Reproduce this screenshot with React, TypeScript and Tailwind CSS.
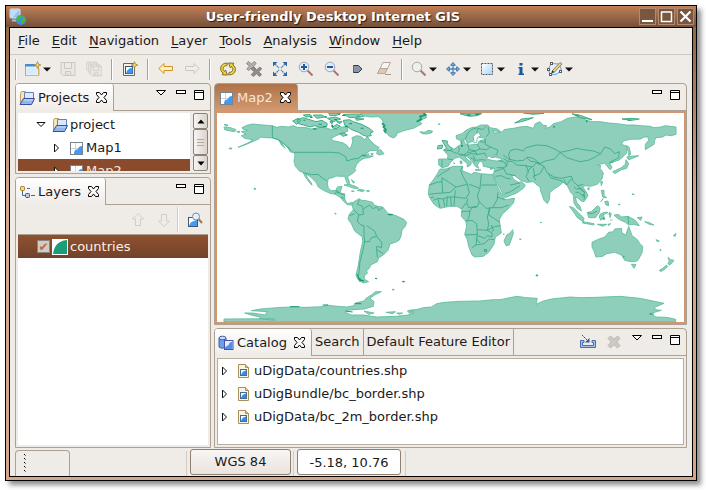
import React from "react";

type IconProps = { children: React.ReactNode; className?: string };

function Icon({ children, className = "" }: IconProps) {
  return (
    <svg viewBox="0 0 16 16" aria-hidden="true" className={`h-4 w-4 shrink-0 ${className}`}>
      {children}
    </svg>
  );
}

/* ---------- toolbar icons ---------- */

const Sparkle = () => (
  <path d="M12.500 .5 13.400 3.100 15.900 4 13.400 4.900 12.500 7.500 11.600 4.900 9.100 4 11.600 3.100Z" fill="#f3d67a" stroke="#b08a2c" strokeWidth=".8" />
);

const NewIcon = () => (
  <Icon>
    <rect x=".5" y="3.500" width="13" height="11" fill="#e2f1fb" stroke="#b9a878" />
    <rect x="0" y="3" width="11" height="2.500" fill="#4a8acb" />
    <path d="M1 14.500h13v-7" fill="none" stroke="#dcb75f" />
    <rect x="2" y="7" width="10" height="6" fill="#d6ecfa" />
    <Sparkle />
  </Icon>
);

const Floppy = ({ x = 0, y = 0, s = 1 }: { x?: number; y?: number; s?: number }) => (
  <g transform={`translate(${x} ${y}) scale(${s})`} fill="#ebe8e4" stroke="#cbc7c2">
    <path d="M1 1.500h14v13h-12l-2-2Z" />
    <path d="M4.500 1.500v6h7v-6M5.500 14.500v-4h5v4M7.500 12v2" fill="none" />
  </g>
);

const SaveIcon = () => (
  <Icon>
    <Floppy />
  </Icon>
);

const SaveAllIcon = () => (
  <Icon>
    <Floppy s={0.7} />
    <Floppy x={2} y={2} s={0.75} />
    <Floppy x={4} y={4} s={0.75} />
  </Icon>
);

const NewMapIcon = () => (
  <Icon>
    <path d="M1.500 2.500h11v12h-11z" fill="#f6f3e6" stroke="#6b6656" />
    <rect x="3.500" y="5.500" width="7" height="7" fill="#fff" stroke="#3b526e" />
    <path d="M4 12.500c1-4 3-5 6.500-6v6Z" fill="#3b97ef" />
    <Sparkle />
  </Icon>
);

const ArrowIcon = ({ kind }: { kind: "back" | "forward" }) => (
  <Icon>
    <path
      d={kind === "back" ? "M.8 7.500 6 2.500v3h8.500v4H6v3Z" : "M15.200 7.500 10 2.500v3H1.500v4H10v3Z"}
      fill={kind === "back" ? "#fdf0bb" : "#f1eeea"}
      stroke={kind === "back" ? "#cf932d" : "#cbc7c1"}
    />
  </Icon>
);

const RefreshIcon = () => (
  <Icon>
    <g fill="#f0d43c" stroke="#6f611e" strokeWidth=".9" strokeLinejoin="round">
      <path d="M7.500 2.200C3.500 1.800 1 4 .6 7.200c-.2 2 .8 3.800 2.600 4.800l-1 1.800 5.200.2-1.800-5-1 1.400C3.500 9.600 3 8.500 3.200 7.400c.3-1.800 1.700-2.900 3.700-2.800Z" />
      <path d="M8.500 13.800c4 .4 6.500-1.800 6.900-5 .2-2-.8-3.800-2.600-4.800l1-1.800-5.200-.2 1.800 5 1-1.400c1.100.8 1.600 1.900 1.400 3-.3 1.800-1.700 2.900-3.700 2.800Z" />
    </g>
  </Icon>
);

const StopIcon = () => (
  <Icon>
    <g fill="#b3b2b0" stroke="#7a7876" strokeWidth=".8">
      <path d="m.5 2.500 2-2L5.500 3l3-2.500 1.500 2-2.500 2.800L10 8 8 9.500 5.500 7 2.500 9.500.8 7.800 3.500 5.200Z" />
      <path fill="#8f8e8c" d="m5 8 2-2 3.500 2.800L14 6l1.700 2-3 2.800 3 2.700-2 2-3.200-2.700L7.200 15.500 5.200 13.500 8.200 10.800Z" />
    </g>
  </Icon>
);

const ExtentIcon = () => (
  <Icon>
    <path d="M1 1h4.500L1 5.500ZM15 1v4.500L10.500 1ZM1 15v-4.500L5.500 15ZM15 15h-4.500l4.500-4.500Z" fill="#2b66a5" />
    <path d="m3 3 4 4M13 3 9 7M3 13l4-4M13 13 9 9" stroke="#3f78b3" strokeWidth="1.300" strokeDasharray="1.600 .7" />
  </Icon>
);

const LensIcon = ({ sign }: { sign?: "plus" | "minus" }) => (
  <Icon>
    <path d="m9.500 9.500 5 5" stroke="#a5766c" strokeWidth="2" />
    <circle cx="6" cy="6" r="4.800" fill={sign ? "#e1eefa" : "#edf1ec"} stroke={sign ? "#9aa6ba" : "#a6aaa4"} />
    {sign && <path d={sign === "plus" ? "M3 6h6M6 3v6" : "M3 6h6"} stroke="#2458a0" strokeWidth="2" />}
  </Icon>
);

const TagIcon = () => (
  <Icon>
    <path d="M3.500 4.500h5l3.500 3.500-3.500 3.500h-5Z" fill="#8a93a3" stroke="#373a42" />
    <path d="M3.500 4.500v7" stroke="#5f6775" />
  </Icon>
);

const EraserIcon = () => (
  <Icon>
    <path d="M7 1.500h7.500L9 12.500H1.500Z" fill="#faf5ec" stroke="#b9a797" />
    <path d="M4 7.500h7.300L9 12.500H1.500Z" fill="#dccab7" stroke="#b9a797" />
    <path d="M9 13.500h6" stroke="#aa998b" />
  </Icon>
);

const PanIcon = () => (
  <Icon>
    <path d="M8 3v10M3 8h10" stroke="#4c84bd" strokeWidth="1.300" />
    <path d="M8 1.500 10.300 4.200H5.700ZM8 14.500l2.300-2.700H5.700ZM1.500 8l2.700-2.300v4.600ZM14.500 8l-2.700-2.300v4.600Z" fill="#a9c8e6" stroke="#2f6aa8" />
  </Icon>
);

const SelectIcon = () => (
  <Icon>
    <defs>
      <linearGradient id="selFill" x1="0" y1="0" x2="1" y2="1">
        <stop offset="0" stopColor="#fff" />
        <stop offset="1" stopColor="#a9d5f7" />
      </linearGradient>
    </defs>
    <rect x="2.500" y="2.500" width="11" height="11" fill="url(#selFill)" stroke="#4d5b6b" strokeDasharray="2 1" />
  </Icon>
);

const InfoIcon = () => (
  <Icon>
    <path d="M6.500 2h3v2.500h-3zM5.500 6h4v6.500H11V14H5.500v-1.500h1V7.500h-1Z" fill="#17599c" />
  </Icon>
);

const EditGeomIcon = () => (
  <Icon>
    <path d="M4 2.500 12 3l2.500 6L10 13l-7 1L1.500 8Z" fill="#e3f0fb" stroke="#5fa6e4" />
    <g fill="#fff" stroke="#5a5c61">
      <rect x="3.500" y="1.500" width="2" height="2" />
      <rect x=".5" y="7.500" width="2" height="2" />
      <rect x="12.500" y="9.500" width="2" height="2" />
      <rect x="2.500" y="12.500" width="2" height="2" />
    </g>
    <path d="m5.500 9.500 7.500-8 2 1.500-7.500 8-2.500 1Z" fill="#ecce89" stroke="#8a6b34" strokeWidth=".8" />
    <path d="m4.500 12 .8-2.500 2 1.500Z" fill="#222" />
  </Icon>
);

/* ---------- view icons ---------- */

const MapIcon = () => (
  <Icon>
    <rect x="2.500" y="2.500" width="12" height="12" fill="#fff" stroke="#7a838b" />
    <path d="M7.500 3v11M3 8.500h11" stroke="#cfd3d6" />
    <path d="M6 14c0-3 1-4 3-4.500 2-.5 1-3.500 5-3.500v8Z" fill="#3f9bf3" />
  </Icon>
);

const ProjectIcon = () => (
  <Icon>
    <path d="M1.500 12.500v-9l1-2h4l1 2h2v9Z" fill="#f7e7b8" stroke="#bb9f5f" />
    <path d="M5.500 2.500h9v9h-9z" fill="#dbe9fc" stroke="#6380bd" />
    <path d="M1 14.500 4.500 8.500h11l-3 6Z" fill="#8fb7ee" stroke="#3b4fa0" />
    <path d="M5 10h9" stroke="#cfe0f8" />
  </Icon>
);

const LayersIcon = () => (
  <Icon>
    <path d="M3.500 5v6.500H6M8 4.500h3M12 11.500h4" fill="none" stroke="#3a6ea8" />
    <rect x="1.500" y="2.500" width="4" height="4" rx="1" fill="#f5d98c" stroke="#a77b22" />
    <rect x="6.500" y="9.500" width="4" height="4" rx="1" fill="#c4c7e6" stroke="#504a80" />
  </Icon>
);

const LayerArrow = ({ down = false }: { down?: boolean }) => (
  <Icon>
    <path d={down ? "M8 14.500 2.500 9h3V2.500h5V9h3Z" : "M8 1.500 2.500 7h3v6.500h5V7h3Z"} fill="#efece8" stroke="#d1cdc7" />
  </Icon>
);

const ZoomLayerIcon = () => (
  <Icon>
    <rect x="1.500" y="5.500" width="9" height="9" fill="#fff" stroke="#45576a" />
    <path d="M2 14c1-4 4-5 8-6v6Z" fill="#3f9bf3" />
    <path d="m11.500 7 3.500 4" stroke="#9a7b5a" strokeWidth="2" />
    <circle cx="9" cy="4.500" r="3.500" fill="#e3effa" stroke="#7b8b9b" />
  </Icon>
);

const CatalogIcon = () => (
  <Icon>
    <path d="M1 3v9c1 1.500 6 1.500 7 0V3Z" fill="#6ea0e2" stroke="#3d5ea8" />
    <ellipse cx="4.500" cy="3" rx="3.500" ry="1.800" fill="#c8defa" stroke="#3d5ea8" />
    <rect x="6.500" y="5.500" width="8.500" height="9" fill="#e7ecfb" stroke="#4b51a4" />
    <path d="M7 14c0-4 3-2 4-5 1-2 2-2 3.500-2v7Z" fill="#4f8fe8" />
  </Icon>
);

const FileIcon = () => (
  <Icon>
    <path d="M2.500 1.500h7l3 3v10h-10Z" fill="#f8f5e8" stroke="#a89158" />
    <path d="M9.500 1.500v3h3" fill="#e5c773" stroke="#a89158" />
    <rect x="4.500" y="6.500" width="6" height="6" fill="#fff" stroke="#4b6a90" />
    <path d="M5 12c1-3 2-3.500 5-4.500V12Z" fill="#2f8fee" />
  </Icon>
);

const ImportIcon = () => (
  <Icon>
    <path d="M.5 6.500h3.500v2H2.500v3h11v-3H12v-2h3.500v7H.5Z" fill="#a9c3e8" stroke="#4a6cac" />
    <path d="m2 1 5.500 5.500" stroke="#30508f" strokeDasharray="2 .6" />
    <path d="M9.500 4v4.500H5Z" fill="#1c5f9f" />
  </Icon>
);

const RemoveIcon = () => (
  <Icon>
    <path d="m2 4.500 2.500-2.500L8 5.200 11.500 2 14 4.500 10.800 8l3.200 3.500-2.500 2.500L8 10.800 4.500 14 2 11.500 5.200 8Z" fill="#cdcac6" stroke="#bcb8b3" />
  </Icon>
);

const AppIcon = () => (
  <svg viewBox="0 0 18 18" aria-hidden="true" className="h-[18px] w-[18px] shrink-0">
    <rect x="1" y="1" width="10" height="9" rx="1" fill="#8fc3f2" stroke="#d8e8f6" />
    <path d="M2 2h8L4 9H2Z" fill="#c1def8" />
    <path d="M3 12.500h7" stroke="#9dc4e6" strokeWidth="2" />
    <circle cx="12" cy="12" r="5" fill="#3f8fe0" />
    <path d="M8 9c2-2 4-2 4 0s-2 1-2 3-2 1-3-1ZM13 8c3 0 4 3 3 5l-3 3-1-3 2-2Z" fill="#48b83f" />
  </svg>
);

/* ---------- small glyphs ---------- */

const Twisty = ({ open = false }: { open?: boolean }) => (
  <svg viewBox="0 0 10 10" aria-hidden="true" className="h-[10px] w-[10px] shrink-0">
    <path d={open ? "M1 2.500h8L5 6.500Z" : "M2.500 1v8l4-4Z"} fill="#fff" stroke="#111" />
  </svg>
);

const CloseX = ({ active = false }: { active?: boolean }) => (
  <svg viewBox="0 0 11 11" aria-hidden="true" className="h-[11px] w-[11px]">
    <path
      d="M.5.500h3l2 2.500 2-2.500h3V2.500l-2.500 3 2.500 3v2h-3l-2-2.500-2 2.500h-3v-2L3 5.500l-2.500-3Z"
      fill={active ? "#fff" : "#fbfaf9"}
      stroke="#000"
    />
  </svg>
);

function ViewControls({ menu = false }: { menu?: boolean }) {
  return (
    <div className="flex items-start gap-2 pt-[6px]">
      {menu && (
        <button type="button" aria-label="View menu" className="mr-[2px]">
          <svg viewBox="0 0 10 10" className="block h-[10px] w-[10px]">
            <path d="M.5.500h9L5 5Z" fill="#fff" stroke="#000" />
          </svg>
        </button>
      )}
      <button type="button" aria-label="Minimize">
        <svg viewBox="0 0 10 10" className="block h-[10px] w-[10px]">
          <rect x=".5" y=".5" width="9" height="3" fill="#fff" stroke="#000" />
        </svg>
      </button>
      <button type="button" aria-label="Maximize">
        <svg viewBox="0 0 10 10" className="block h-[10px] w-[10px]">
          <path d="M.5.500h9v9h-9zM.5 2.500h9" fill="#fff" stroke="#000" />
        </svg>
      </button>
    </div>
  );
}

/* ---------- world map ---------- */

function WorldMap() {
  return (
    <svg viewBox="21 24 1401 627" preserveAspectRatio="none" role="img" aria-label="World map of countries" className="block h-full min-h-0 w-full flex-1 bg-white">
      <g fill="#8ecfbb" stroke="#5cbb9e" strokeWidth="2.500" strokeLinejoin="round">
        {/* North and Central America */}
        <path d="M96 68 110 61 128 57 160 60 187 62 200 67 215 64 235 66 250 62 262 67 290 68 303 72 315 70 340 66 352 70 365 74 385 72 396 66 412 66 414 78 400 84 394 86 378 92 364 100 368 107 385 110 400 114 412 122 417 132 424 124 428 110 426 98 440 92 452 94 464 104 472 94 480 106 495 120 508 128 500 136 480 137 462 150 476 146 474 152 490 153 478 158 462 160 450 167 440 178 434 192 438 196 430 204 414 214 413 218 419 232 416 241 410 232 404 214 390 214 378 213 368 218 355 221 352 234 355 250 364 257 378 256 382 246 396 244 390 264 404 266 404 280 408 291 414 296 424 292 434 294 426 300 412 299 400 288 392 278 376 268 360 265 340 256 325 246 318 232 302 216 288 206 292 218 304 234 306 241 296 230 284 212 280 203 268 198 256 184 252 168 255 152 252 143 240 136 228 122 214 112 204 104 188 99 165 98 152 96 146 102 128 110 104 120 84 127 118 112 128 104 104 100 94 92 108 88 94 80 112 76 98 72Z" />
        {/* Arctic archipelago */}
        <path d="M262 44 280 38 296 43 318 50 336 46 352 56 350 64 330 67 314 62 300 66 280 60 266 56ZM248 48 264 40 272 46 260 58ZM400 46 418 44 430 50 455 58 478 70 490 80 480 84 484 92 470 94 458 90 446 82 425 74 404 60ZM366 68 380 58 392 64 378 72ZM390 86 402 84 412 90 398 94ZM310 30 336 30 345 36 320 40ZM280 30 300 28 306 34 288 36ZM352 40 376 36 392 42 370 50ZM400 28 436 27 480 27 452 36 420 38ZM356 24 392 25 380 31 360 32ZM360 50 368 48 366 58ZM380 50 396 50 390 56ZM436 40 462 42 440 46Z" stroke="#25a17b" />
        {/* Aleutians, Caribbean and Pacific islands */}
        <path d="M42 58 54 60 50 64ZM42 66 62 68 78 74 74 80 56 77 44 74ZM80 80 88 78 88 83ZM58 129h7v3h-7ZM132 250h5v3h-5ZM402 240 418 238 436 244 446 250 432 250 415 244ZM442 256 450 253 464 256 458 260ZM470 257h8v2h-8ZM424 224 434 232 430 234ZM424 258h8v2ZM206 104 216 116 226 130 214 120ZM233 124 242 134 250 143 240 140ZM502 136 512 134 522 146 508 150 500 146ZM482 146h8l-4 4Z" />
        <path d="M374 325h4v3ZM495 520h6v2ZM577 529h7v2h-7ZM547 553h5v2h-5ZM991 352h4v1h-4ZM978 510h5v3h-5Z" />
        {/* Greenland and Iceland */}
        <path d="M452 24 458 32 480 36 505 35 515 42 520 52 518 60 526 70 528 82 538 94 550 99 558 94 562 84 585 76 610 70 622 64 636 56 628 50 640 42 650 38 644 24Z" />
        <path d="m516 54 8 8-4 4 8 8-6 2 6 8M620 50 634 42 630 34 648 30 640 24" stroke="#1c9a74" strokeWidth="5" fill="none" />
        <path d="M630 80 645 82 654 76 667 78 666 83 650 87 636 86ZM684 57h6v2Z" />
        {/* South America */}
        <path d="M426 300 432 290 448 281 454 286 468 287 488 292 492 300 502 304 518 306 525 314 534 326 546 328 558 332 582 343 590 353 586 364 576 375 573 393 568 405 558 411 540 417 534 436 520 450 506 459 502 470 482 480 478 490 470 496 472 505 464 511 462 522 476 530 460 534 444 524 438 510 444 486 448 460 452 436 458 410 457 396 434 378 424 356 414 342 418 328 430 314Z" />
        {/* Antarctica */}
        <path d="M42 651V642L192 641 195 646 148 641 152 636 130 632 104 624 128 624 165 630 172 620 124 617 152 612 200 608 240 606 290 607 336 605 350 600 372 603 410 606 432 602 436 594 462 588 468 580 484 570 496 560 514 560 494 570 480 580 492 590 490 604 462 612 432 614 412 616 406 622 424 630 460 630 500 636 560 634 594 630 612 624 596 616 624 613 640 608 664 606 680 596 704 592 750 589 808 588 850 584 870 584 920 574 950 578 982 580 978 598 1000 588 1024 582 1080 576 1110 578 1160 577 1230 574 1290 580 1362 595 1334 607 1336 614 1354 616 1320 626 1338 636 1370 637 1397 643V651Z" />
        <path d="M528 622 556 620 548 626ZM560 624 578 624 568 628ZM592 618 610 618 600 626ZM462 618 492 624 476 628Z" />
        <path d="m406 618 22 3M338 600h16M240 605h28M434 596h20M1318 627h14" stroke="#1c9a74" strokeWidth="3" />

        <g transform="translate(450 0)">
          {/* Eurasia */}
          <path d="M290 102 288 92 306 86 318 76 334 68 350 66 362 60 384 60 390 68 412 72 422 80 398 77 404 84 424 82 432 74 444 72 460 70 478 66 500 64 520 70 526 56 540 50 548 60 560 62 556 70 570 66 580 56 604 50 622 40 645 36 668 38 678 46 700 50 720 50 746 54 772 56 800 60 822 60 844 62 870 64 882 68 902 66 916 62 948 66 948 88 934 92 918 90 908 96 888 98 884 106 882 118 866 128 856 134 856 118 866 106 864 96 852 96 842 102 810 103 790 108 784 118 802 124 800 144 780 164 762 170 748 172 756 188 750 194 740 182 734 174 712 180 722 182 720 190 730 204 726 222 712 238 692 244 676 242 668 246 676 256 684 272 672 290 664 288 652 278 646 276 650 292 660 304 664 318 652 310 642 294 640 270 632 262 622 242 610 232 598 242 582 252 570 262 568 284 562 296 552 286 542 258 540 246 528 238 520 230 500 232 482 226 464 212 454 210 462 224 476 232 484 230 496 240 490 250 470 264 436 278 430 270 420 250 406 226 400 212 402 200 404 190 390 188 370 184 368 172 360 168 352 180 356 190 346 184 338 172 328 160 314 150 318 160 334 172 332 180 322 186 322 176 308 164 298 156 284 160 272 172 264 184 246 188 236 180 236 162 262 162 264 150 254 140 270 136 286 130 296 122 304 118 302 108 312 106 314 116 328 120 352 118 358 108 376 102 370 98 358 98 356 88 348 88 342 96 340 108 330 112 322 116 316 102 300 106Z" />
          {/* Inland waters */}
          <path d="M380 162 384 152 396 158 406 156 420 160 428 166 410 168 396 166ZM340 94 348 86 356 82 362 92 352 98 350 112 342 114ZM402 148 412 150 404 154Z" fill="#fff" />
          {/* British Isles, Svalbard and Novaya Zemlya */}
          <path d="M246 106 262 108 262 116 270 126 278 130 272 136 250 136 260 130 254 120ZM234 122 248 120 246 130 232 132ZM464 54 476 48 484 42 502 40 520 38 504 44 484 50ZM300 26 330 24 365 26 350 32 330 34 312 30ZM636 26 664 32 696 44 660 38ZM786 42 810 40 838 42 816 46ZM490 24 552 25 520 28Z" stroke="#2ba27d" />
          <path d="M300 168h6v8h-5ZM346 194h16v2h-16ZM390 190h10l-8 4ZM280 174h4v2Z" />
          {/* Africa */}
          <path d="M240 192 258 192 280 184 308 184 306 196 318 202 334 208 342 202 362 206 386 208 398 208 402 220 410 240 420 260 432 278 434 284 464 280 460 294 444 312 428 326 418 344 420 360 424 384 406 396 402 418 386 442 370 454 344 456 336 450 326 424 322 404 314 388 320 364 318 350 304 334 306 312 290 304 268 304 240 310 222 298 208 276 205 266 208 240 222 222 232 206Z" />
          <path d="M458 374 460 386 448 420 438 422 432 408 440 390 450 384ZM478 402h5v2ZM430 387h2v3Z" />
          {/* East Asian islands */}
          <path d="M802 122 808 128 812 148 806 152 806 140 800 130ZM800 156 810 154 836 152 818 160 806 164ZM798 164 806 176 800 190 784 194 764 206 758 200 784 188 796 178ZM722 230 728 230 724 242ZM682 250 688 248 686 256ZM724 256 732 256 732 272 740 278 728 276ZM734 290 744 288 746 302 738 300ZM722 290 730 280 726 286ZM816 267h6v2ZM774 298h6v2Z" />
          <path d="M628 304 640 308 654 322 672 340 670 350 652 338 640 320ZM668 350 702 356 702 360 668 354ZM682 322 694 320 712 302 720 308 718 322 706 338 686 338ZM720 328 732 322 744 322 730 330 734 344 726 342 722 346 718 336ZM712 358 740 358 728 364ZM744 358 752 356 746 362ZM748 322 754 326 750 338Z" />
          {/* New Guinea and Melanesia */}
          <path d="M762 330 776 328 784 336 804 334 826 346 838 362 820 358 806 360 796 352 782 346 770 338ZM832 338 846 336 842 346ZM854 350 866 352 882 360 868 358ZM888 404 898 408 892 410ZM940 392 948 385 946 394ZM900 434h3v3h-3Z" />
          {/* Australia and New Zealand */}
          <path d="M696 412 712 404 734 396 746 382 760 380 764 372 784 370 786 384 798 390 802 376 806 364 812 380 816 392 830 402 840 416 848 424 846 444 836 462 832 468 814 470 794 466 786 452 780 448 764 442 740 446 728 454 708 456 702 438 696 426ZM814 478 828 478 822 490ZM924 457 932 464 942 466 936 474 928 480 924 476 928 468ZM920 480 922 486 912 494 902 500 898 496 908 490Z" />
        </g>
      </g>
      <g fill="none" stroke="#36a884" strokeWidth="2.500" strokeLinejoin="round">
        <path d="M187 62V98L205 104 222 116 242 136M252 142H365L388 144 408 156 410 168 430 162 446 160 456 150 472 154M280 203 305 209 324 208 338 220 350 227M376 268 380 256 388 264 396 268 404 272M392 278 404 280" />
        <path d="M448 284 442 298 458 304 460 328 446 330 442 348 452 360 462 362 462 388 464 410 458 440 450 470 446 510M432 314 446 330M460 312 478 300 490 312 500 304 506 316 518 308M470 362 494 378 500 394 484 398 478 410 464 410M500 394 516 414 514 428 500 424 500 434 520 446M500 434 502 458M418 332 434 326" />
        <path d="m442 508 6 16 14 4M450 520v10M534 329h14" stroke="#1c9a74" strokeWidth="4" />
        <g transform="translate(450 0)">
          {/* African borders */}
          <path d="M232 216 248 204 266 194 268 188M246 218 288 246 322 238 308 212 302 196 308 184M246 218V230L232 232 208 240M246 230 248 264 220 266 208 268M248 264 270 262 288 246M322 238 328 264 318 280 284 276 286 256M328 238 360 250 364 208M364 240H410M360 250 352 272 358 292 352 304 326 308 320 294 324 280M358 290 378 310 398 308 412 282 414 262M398 308 424 308 446 300M412 276 434 284M388 308 386 330 420 352M304 320 330 318 336 308 352 306M318 348 336 346 350 356 352 388 316 390M352 374 382 376 386 358 382 336 390 308M330 318 326 340 318 350M382 376 396 384 396 396 382 392 374 400 352 392M352 388 348 420 336 428M348 420 372 416 388 402 402 404M348 400 360 414M382 376 400 366 422 362M220 286 234 280 250 282 262 276 284 276M234 280 240 308M250 282 254 304M262 276 260 304M272 276 274 304M284 276 282 302M212 278 222 276M304 312 318 294" />
          <path d="M372 434h8v6h-6ZM394 360l6 14-2 6" strokeWidth="3" />
          {/* European and Middle Eastern borders */}
          <path d="M316 102 324 84 334 74 352 68 M350 82 354 70 368 74 378 64M384 66 388 84 378 96M376 102 376 118 392 126 414 136 410 148M352 118 360 132 380 134 392 126M322 118 328 134 346 138 360 132M296 124 298 136 292 144 304 152 318 146 328 134M264 162 278 164M246 164 246 184M300 146 316 152 334 146 354 148 374 144 378 154M340 152 346 166 366 164 378 166M322 144 346 138 350 150M330 158 340 162 344 172M304 108 306 118M270 136 290 146M360 110 376 112M416 166 434 172 440 184 430 188 410 188M404 200 430 190M430 188 438 206 466 212M440 184 442 168 430 160M406 214 424 212 440 220 452 222M450 240 480 234M434 266 452 260 480 242M442 168 458 170 470 180 498 182 506 200 498 214 508 230M450 166 446 148 452 136 470 132 490 138 498 128 530 120 560 122 588 134 600 142M430 150 446 162 470 168 490 166 500 158" />
          {/* Central, South and East Asian borders */}
          <path d="M500 156 520 160 540 176 556 168 584 162 600 142 630 136 650 130 670 134 700 138 722 146 702 158 684 166 660 170 640 164 620 158 600 142M722 146 734 126 752 132 764 146 778 140 776 158 750 172M496 182 516 186 530 174 552 184 540 206 520 214 528 226M540 176 530 172 510 168 500 158M516 186 500 200M552 184 562 204 582 216 606 220 622 216 634 214 640 230 654 242 670 238M566 206 572 218 606 228 612 234M612 224 620 240 634 222M642 246 650 252 664 250 674 262 668 276M646 262 656 262 664 270 674 270 672 284M654 242 664 256 674 262M748 174 760 172M520 190 524 214M804 334 806 356M684 324 696 326 712 318" />
        </g>
      </g>
      <g fill="#1c9a74">
        <path d="M280 44h6v3h-6ZM300 36h8v3h-8ZM326 56h10v3h-10ZM344 34h7v4h-7ZM372 42h9v3h-9ZM396 30h9v3h-9ZM418 54h8v4h-8ZM452 68h9v3h-9ZM338 64h12v3h-12ZM310 70h9v4h-9ZM364 60h6v6h-6ZM404 62h10v4h-10ZM384 26h6v3h-6ZM440 32h9v3h-9ZM382 260h4v5h-4ZM458 150h5v4h-5ZM753 120h6v5h-6ZM796 26h12v5h-12ZM770 28h12v4h-12ZM1030 62h4v6h-4ZM1096 29h12v3h-12ZM1128 46h4v6h-4ZM1252 44h12v3h-12ZM1178 338h6v3h-6ZM1200 344h8v2h-8ZM1192 326h7v2h-7ZM1240 452h3v5h-3ZM495 519h5v3h-5ZM578 528h5v3h-5ZM979 509h4v4h-4Z" />
      </g>
    </svg>
  );
}

/* ---------- window pieces ---------- */

const menus = ["File", "Edit", "Navigation", "Layer", "Tools", "Analysis", "Window", "Help"];

const ToolSep = () => <div className="mx-1 h-[21px] w-[2px] border-l border-[#aca092] bg-white" />;

function Tool({ label, drop = false, children }: { label: string; drop?: boolean; children: React.ReactNode }) {
  return (
    <button type="button" aria-label={label} title={label} className={`flex items-center gap-[2px] ${drop ? "px-1" : "px-[5px]"}`}>
      {children}
      {drop && (
        <svg viewBox="0 0 8 5" aria-hidden="true" className="h-[5px] w-2">
          <path d="M0 .5h8L4 4.500Z" fill="#111" />
        </svg>
      )}
    </button>
  );
}

function ActiveTab({ icon, title, map = false }: { icon: React.ReactNode; title: string; map?: boolean }) {
  return (
    <div
      className={`flex h-[27px] shrink-0 items-center rounded-t-[3px] border-r border-[#aca092] pr-[6px] pl-[3px] ${
        map ? "bg-linear-to-b from-[#ad7248] to-[#d39a71] text-[#f8e6da]" : "bg-linear-to-b from-white to-[#efebe7]"
      }`}
    >
      {icon}
      <button type="button" className="pl-[3px]">{title}</button>
      <button type="button" aria-label={`Close ${title}`} className="pl-[7px]">
        <CloseX active={map} />
      </button>
    </div>
  );
}

const panel = "flex min-h-0 flex-col rounded-t-[4px] border border-[#aca092]";
const headRest = "flex min-w-0 flex-1 justify-end border-b border-[#aca092] pr-[6px]";
const backTab = "shrink-0 border-r border-b border-[#aca092] px-[3px]";

function ScrollBar() {
  const box = "flex w-[15px] items-center justify-center rounded-[2px] border border-[#8d8276] bg-linear-to-r from-[#f7f5f3] to-[#d9d3cc]";
  return (
    <div className="ml-[3px] flex shrink-0 flex-col">
      <button type="button" aria-label="Scroll up" className={`${box} h-4`}>
        <svg viewBox="0 0 8 5" className="h-[5px] w-2"><path d="M4 .5 7.500 4.500h-7Z" /></svg>
      </button>
      <div className={`${box} flex-1 flex-col gap-[2px]`}>
        <i className="h-px w-[7px] bg-[#b3aaa0]" />
        <i className="h-px w-[7px] bg-[#b3aaa0]" />
        <i className="h-px w-[7px] bg-[#b3aaa0]" />
      </div>
      <button type="button" aria-label="Scroll down" className={`${box} h-4`}>
        <svg viewBox="0 0 8 5" className="h-[5px] w-2"><path d="M.5.500h7L4 4.500Z" /></svg>
      </button>
    </div>
  );
}

const catalog = ["uDigData/countries.shp", "uDigBundle/bc_border.shp", "uDigData/bc_2m_border.shp"];

const winButton = "flex h-[17px] w-[17px] items-center justify-center border border-[#b28a72] bg-[#7b563f]";

export default function App() {
  return (
    <div className="flex h-screen min-h-[400px] bg-white pt-[5px] pr-[9px] pb-[9px] pl-[5px] font-['DejaVu_Sans',sans-serif] text-[13px] leading-4 text-[#1a1a1a]">
      <div className="flex min-w-0 flex-1 flex-col border border-black bg-linear-to-b from-[#86603f] to-[#d3a78c] to-40% shadow-[4px_4px_5px_rgba(0,0,0,0.45)]">
        <header className="flex h-[21px] shrink-0 items-center bg-linear-to-b from-[#c07f56] to-[#755039] pr-[2px] pl-[3px]">
          <AppIcon />
          <h1 className="flex-1 text-center font-bold text-white [text-shadow:1px_1px_1px_#2b1a10]">User-friendly Desktop Internet GIS</h1>
          <div className="flex gap-[2px]">
            <button type="button" aria-label="Minimize window" className={winButton}>
              <svg viewBox="0 0 15 15" className="h-[15px] w-[15px]"><path d="M2 12h11" stroke="#fff" strokeWidth="2" /></svg>
            </button>
            <button type="button" aria-label="Maximize window" className={winButton}>
              <svg viewBox="0 0 15 15" className="h-[15px] w-[15px]"><path d="M2.500 3v9.500h10V3M2 3h11" fill="none" stroke="#fff" strokeWidth="1.500" /></svg>
            </button>
            <button type="button" aria-label="Close window" className={winButton}>
              <svg viewBox="0 0 15 15" className="h-[15px] w-[15px]"><path d="m2.500 2.500 10 10M12.500 2.500l-10 10" stroke="#fff" strokeWidth="2.200" /></svg>
            </button>
          </div>
        </header>

        <div className="mx-[3px] mb-[3px] flex min-h-0 flex-1 flex-col border border-black bg-[#efebe7]">
          <nav className="flex h-[27px] shrink-0 items-center border-b border-[#d0c8bf] pl-[2px]">
            {menus.map((m) => (
              <button type="button" key={m} className="px-[6px]">
                <span className="underline underline-offset-2">{m[0]}</span>
                {m.slice(1)}
              </button>
            ))}
          </nav>

          <div role="toolbar" aria-label="Main" className="flex h-7 shrink-0 items-center pl-px">
            <ToolSep />
            <Tool label="New" drop><NewIcon /></Tool>
            <Tool label="Save"><SaveIcon /></Tool>
            <Tool label="Save all"><SaveAllIcon /></Tool>
            <ToolSep />
            <Tool label="New map"><NewMapIcon /></Tool>
            <ToolSep />
            <Tool label="Back"><ArrowIcon kind="back" /></Tool>
            <Tool label="Forward"><ArrowIcon kind="forward" /></Tool>
            <ToolSep />
            <Tool label="Refresh"><RefreshIcon /></Tool>
            <Tool label="Stop rendering"><StopIcon /></Tool>
            <Tool label="Zoom to extent"><ExtentIcon /></Tool>
            <Tool label="Zoom in"><LensIcon sign="plus" /></Tool>
            <Tool label="Zoom out"><LensIcon sign="minus" /></Tool>
            <Tool label="Commit"><TagIcon /></Tool>
            <Tool label="Clear selection"><EraserIcon /></Tool>
            <ToolSep />
            <Tool label="Zoom tool" drop><LensIcon /></Tool>
            <Tool label="Pan tool" drop><PanIcon /></Tool>
            <Tool label="Selection tool" drop><SelectIcon /></Tool>
            <Tool label="Info tool" drop><InfoIcon /></Tool>
            <Tool label="Edit tool" drop><EditGeomIcon /></Tool>
          </div>

          <main className="flex min-h-0 flex-1 gap-[3px] px-[5px]">
            <div className="flex w-[196px] shrink-0 flex-col gap-[3px]">
              <section className={`${panel} h-[91px] shrink-0`}>
                <div className="flex shrink-0">
                  <ActiveTab icon={<ProjectIcon />} title="Projects" />
                  <div className={headRest}><ViewControls menu /></div>
                </div>
                <div className="flex min-h-0 flex-1 p-[2px]">
                  <ul className="min-w-0 flex-1 overflow-hidden bg-white">
                    <li className="flex h-[23px] items-center pl-[18px]">
                      <Twisty open />
                      <span className="flex items-center gap-[2px] pl-[6px]"><ProjectIcon />project</span>
                    </li>
                    <li className="flex h-[23px] items-center pl-[34px]">
                      <Twisty />
                      <span className="flex items-center gap-[2px] pl-[6px]"><MapIcon />Map1</span>
                    </li>
                    <li className="flex h-[23px] items-center bg-[#8a4b2c] pl-[34px] text-[#f7e7dd]">
                      <Twisty />
                      <span className="flex items-center gap-[2px] pl-[6px]"><MapIcon />Map2</span>
                    </li>
                  </ul>
                  <ScrollBar />
                </div>
              </section>

              <section className={`${panel} flex-1`}>
                <div className="flex shrink-0">
                  <ActiveTab icon={<LayersIcon />} title="Layers" />
                  <div className={headRest}><ViewControls /></div>
                </div>
                <div className="mx-[2px] flex h-[30px] shrink-0 items-center justify-end border-b border-[#aca092] pr-[5px]">
                  <button type="button" aria-label="Move layer up" className="px-[5px]"><LayerArrow /></button>
                  <button type="button" aria-label="Move layer down" className="px-[5px]"><LayerArrow down /></button>
                  <div className="mr-2 h-[25px] w-[2px] border-l border-[#d3ccc4] bg-white" />
                  <button type="button" aria-label="Zoom to layer"><ZoomLayerIcon /></button>
                </div>
                <div className="mx-[2px] mb-[2px] min-h-0 flex-1 bg-white">
                  <label className="flex h-[23px] items-center gap-[2px] bg-linear-to-b from-[#8f5130] to-[#71432a] pl-[19px] text-[#fbefe7]">
                    <input
                      type="checkbox"
                      defaultChecked
                      className="flex h-[13px] w-[13px] appearance-none items-center justify-center border border-[#8d8680] bg-[#d3cbc5] text-[12px] leading-none font-bold text-[#bf6c40] checked:before:content-['✔']"
                    />
                    <svg viewBox="0 0 16 16" aria-hidden="true" className="h-4 w-4 shrink-0">
                      <path d="M0 0h16v16H0Z" fill="#fff" />
                      <path d="M1 15C2 8 5 2 15 1v14Z" fill="#1b9e77" />
                    </svg>
                    countries
                  </label>
                </div>
              </section>
            </div>

            <div className="flex min-w-0 flex-1 flex-col gap-[3px]">
              <section className={`${panel} flex-1`}>
                <div className="flex shrink-0">
                  <ActiveTab icon={<MapIcon />} title="Map2" map />
                  <div className={headRest}><ViewControls /></div>
                </div>
                <div className="flex min-h-0 flex-1 border-2 border-[#d09870]">
                  <WorldMap />
                </div>
              </section>

              <section className={`${panel} h-[120px] shrink-0`}>
                <div className="flex shrink-0">
                  <ActiveTab icon={<CatalogIcon />} title="Catalog" />
                  <button type="button" className={backTab}>Search</button>
                  <button type="button" className={backTab}>Default Feature Editor</button>
                  <div className={headRest}>
                    <div className="flex items-center gap-[10px] pr-[10px]">
                      <button type="button" aria-label="Import"><ImportIcon /></button>
                      <button type="button" aria-label="Remove"><RemoveIcon /></button>
                    </div>
                    <ViewControls menu />
                  </div>
                </div>
                <ul className="m-[2px] min-h-0 flex-1 border border-[#b9aea1] bg-white">
                  {catalog.map((c) => (
                    <li key={c} className="flex h-[23px] items-center pl-[2px]">
                      <Twisty />
                      <span className="flex items-center gap-[2px] pl-[6px]"><FileIcon />{c}</span>
                    </li>
                  ))}
                </ul>
              </section>
            </div>
          </main>

          <footer className="flex h-7 shrink-0 items-end pl-[5px]">
            <div className="mr-auto h-[26px] w-[55px] rounded-t-[4px] border border-b-0 border-[#aca092] pt-[3px] pl-2">
              <svg viewBox="0 0 2 18" className="h-[18px] w-[2px]" aria-hidden="true">
                <path d="M.5 0v18" stroke="#000" strokeDasharray="1 3" />
                <path d="M1.500 1v17" stroke="#000" strokeDasharray="1 3" opacity=".5" />
              </svg>
            </div>
            <div className="mr-[3px] h-[25px] w-px bg-[#d3ccc4]" />
            <button type="button" className="mb-px h-[26px] w-[101px] rounded-[3px] border border-[#8f8072] bg-linear-to-b from-[#f8f5f3] to-[#ece3dd]">WGS 84</button>
            <div className="mr-[3px] ml-[2px] h-[25px] w-px bg-[#d3ccc4]" />
            <input
              aria-label="Cursor coordinates"
              defaultValue="-5.18, 10.76"
              className="mb-px h-[26px] w-[104px] rounded-[3px] border border-[#8f8072] bg-white text-center"
            />
            <div className="mr-[286px] ml-1 h-[25px] w-px bg-[#d3ccc4]" />
          </footer>
        </div>
      </div>
    </div>
  );
}
